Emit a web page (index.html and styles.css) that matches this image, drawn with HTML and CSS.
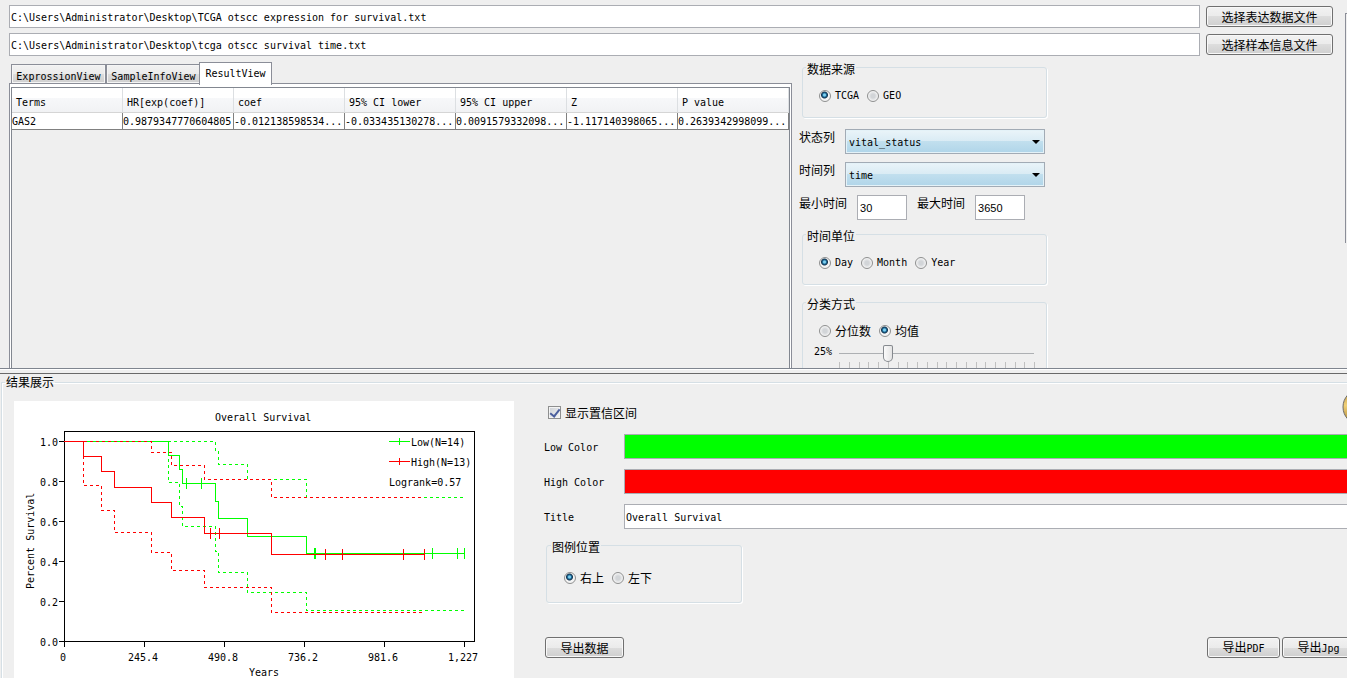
FILE: index.html
```html
<!DOCTYPE html>
<html lang="zh-CN">
<head>
<meta charset="utf-8">
<title>Overall Survival</title>
<link rel="stylesheet" href="styles.css">
</head>
<body>
<div class="app">
  <section class="top-pane">
    <div class="workspace">
      <div class="files">
        <input class="field" type="text" aria-label="Expression file" value="C:\Users\Administrator\Desktop\TCGA otscc expression for survival.txt">
        <button class="btn" type="button">选择表达数据文件</button>
        <input class="field" type="text" aria-label="Sample file" value="C:\Users\Administrator\Desktop\tcga otscc survival time.txt">
        <button class="btn" type="button">选择样本信息文件</button>
      </div>
      <div class="columns">
        <div class="views">
          <div class="tabs" role="tablist">
            <button class="tab" type="button" role="tab">ExprossionView</button>
            <button class="tab" type="button" role="tab">SampleInfoView</button>
            <button class="tab tab-active" type="button" role="tab" aria-selected="true">ResultView</button>
          </div>
          <div class="tab-panel">
            <div class="table-box">
              <table class="results">
                <thead>
                  <tr><th>Terms</th><th>HR[exp(coef)]</th><th>coef</th><th>95% CI lower</th><th>95% CI upper</th><th>Z</th><th>P value</th></tr>
                </thead>
                <tbody>
                  <tr><td>GAS2</td><td>0.9879347770604805</td><td>-0.012138598534...</td><td>-0.033435130278...</td><td>0.0091579332098...</td><td>-1.117140398065...</td><td>0.2639342998099...</td></tr>
                </tbody>
              </table>
            </div>
          </div>
        </div>
        <form class="settings">
          <fieldset class="group">
            <legend>数据来源</legend>
            <div class="choices">
              <label class="choice latin"><input type="radio" name="source" checked>TCGA</label>
              <label class="choice latin"><input type="radio" name="source">GEO</label>
            </div>
          </fieldset>
          <div class="pairs">
            <div class="pair">
              <label class="pair-label" for="status">状态列</label>
              <span class="combo"><select id="status"><option>vital_status</option></select></span>
            </div>
            <div class="pair">
              <label class="pair-label" for="time">时间列</label>
              <span class="combo"><select id="time"><option>time</option></select></span>
            </div>
            <div class="pair">
              <label class="pair-label" for="min">最小时间</label>
              <input class="number" id="min" type="text" value="30">
              <label class="pair-label" for="max">最大时间</label>
              <input class="number" id="max" type="text" value="3650">
            </div>
          </div>
          <fieldset class="group">
            <legend>时间单位</legend>
            <div class="choices">
              <label class="choice latin"><input type="radio" name="unit" checked>Day</label>
              <label class="choice latin"><input type="radio" name="unit">Month</label>
              <label class="choice latin"><input type="radio" name="unit">Year</label>
            </div>
          </fieldset>
          <fieldset class="group">
            <legend>分类方式</legend>
            <div class="choices">
              <label class="choice"><input type="radio" name="split">分位数</label>
              <label class="choice"><input type="radio" name="split" checked>均值</label>
            </div>
            <div class="slider">
              <label class="latin" for="cut">25%</label>
              <div class="slider-body">
                <input id="cut" type="range" min="0" max="100" value="25">
                <svg class="ticks" viewBox="0 0 205 8" aria-hidden="true"><path d="M5.500 0v8M15.500 0v8M25.500 0v8M34.500 0v8M44.500 0v8M54.500 0v8M64.500 0v8M73.500 0v8M83.500 0v8M93.500 0v8M103.500 0v8M112.500 0v8M122.500 0v8M132.500 0v8M142.500 0v8M151.500 0v8M161.500 0v8M171.500 0v8M181.500 0v8M190.500 0v8M200.500 0v8"/></svg>
              </div>
            </div>
          </fieldset>
        </form>
      </div>
    </div>
    <div class="edge"></div>
  </section>
  <div class="divider"></div>
  <fieldset class="bottom-pane">
    <legend>结果展示</legend>
    <div class="result">
      <svg class="chart" viewBox="14 401 500 290" width="500" height="290" role="img" aria-label="Overall Survival">
        <g class="axis">
          <path d="M64.500 431.500H474.500V641.500H64.500Z"/>
          <path d="M59 441.500h5M59 481.500h5M59 521.500h5M59 561.500h5M59 601.500h5M59 641.500h5"/>
          <path d="M64.500 642v5M144.500 642v5M224.500 642v5M304.500 642v5M384.500 642v5M464.500 642v5"/>
        </g>
        <g class="low">
          <path d="M64.500 441.500H168.500V455.500H179.500V469.500H182.500V483.500H215.500V501.500H218.500V518.500H247.500V536.500H306.500V553.500H464.500"/>
          <path class="dash" d="M168 441.500H215.500V451.500H218.500V464.500H247.500V479.500H306.500V497.500H464"/>
          <path class="dash" d="M168.500 441V482.500H179.500V506.500H182.500V526.500H215.500V551.500H218.500V572.500H247.500V592.500H306.500V610.500H464"/>
          <path d="M186.500 478v11M201.500 478v11M314.500 548v11M315.500 548v11M432.500 548v11M457.500 548v11M464.500 548v11"/>
          <path d="M389 441.500h21M399.500 438v7"/>
        </g>
        <g class="high">
          <path d="M64 441.500H83.500V456.500H101.500V471.500H114.500V487.500H151.500V502.500H171.500V517.500H204.500V533.500H271.500V554.500H424.500"/>
          <path class="dash" d="M84 441.500H151.500V452.500H171.500V465.500H204.500V479.500H271.500V497.500H424"/>
          <path class="dash" d="M83.500 456V485.500H101.500V510.500H114.500V532.500H151.500V552.500H171.500V570.500H204.500V587.500H271.500V612.500H424"/>
          <path d="M210.500 528v11M219.500 528v11M325.500 549v11M342.500 549v11M403.500 549v11M424.500 549v11"/>
          <path d="M389 461.500h21M399.500 458v7"/>
        </g>
        <g class="chart-text">
          <text x="215" y="421">Overall Survival</text>
          <text x="411" y="446">Low(N=14)</text>
          <text x="411" y="466">High(N=13)</text>
          <text x="389" y="486">Logrank=0.57</text>
          <text x="40" y="446">1.0</text>
          <text x="40" y="486">0.8</text>
          <text x="40" y="526">0.6</text>
          <text x="40" y="566">0.4</text>
          <text x="40" y="606">0.2</text>
          <text x="40" y="646">0.0</text>
          <text x="60" y="661">0</text>
          <text x="128" y="661">245.4</text>
          <text x="208" y="661">490.8</text>
          <text x="288" y="661">736.2</text>
          <text x="368" y="661">981.6</text>
          <text x="448" y="661">1,227</text>
          <text x="249" y="676">Years</text>
          <text transform="translate(34 589) rotate(-90)">Percent Survival</text>
        </g>
      </svg>
      <form class="options">
        <div class="option-head">
          <label class="choice"><input type="checkbox" checked>显示置信区间</label>
          <svg class="coin" viewBox="0 0 34 36" aria-hidden="true">
            <defs><linearGradient id="gold" x2="0" y2="1"><stop offset="0" stop-color="#b99443"/><stop offset=".45" stop-color="#f0d078"/><stop offset="1" stop-color="#a98332"/></linearGradient></defs>
            <ellipse class="coin-face" cx="17" cy="18" rx="16" ry="17"/>
          </svg>
        </div>
        <div class="option-rows">
          <label class="latin" for="low">Low Color</label>
          <button class="swatch swatch-low" id="low" type="button" aria-label="Low Color"></button>
          <label class="latin" for="high">High Color</label>
          <button class="swatch swatch-high" id="high" type="button" aria-label="High Color"></button>
          <label class="latin" for="title">Title</label>
          <input class="field" id="title" type="text" value="Overall Survival">
        </div>
        <fieldset class="group legend-place">
          <legend>图例位置</legend>
          <div class="choices">
            <label class="choice"><input type="radio" name="place" checked>右上</label>
            <label class="choice"><input type="radio" name="place">左下</label>
          </div>
        </fieldset>
        <div class="exports">
          <button class="btn export-data" type="button">导出数据</button>
          <button class="btn export" type="button">导出<span class="latin">PDF</span></button>
          <button class="btn export" type="button">导出<span class="latin">Jpg</span></button>
        </div>
      </form>
    </div>
  </fieldset>
</div>
</body>
</html>
```
FILE: styles.css
```css
* { box-sizing: border-box; }

body {
  margin: 0;
  background: #efefef;
  color: #000;
  font: 12px/16px "Noto Sans CJK SC", sans-serif;
}

input, select, button { font: inherit; color: inherit; margin: 0; border-radius: 0; }

.latin, .field, .tab, .results, .combo select, .chart-text {
  font-family: "DejaVu Sans Mono", "Liberation Mono", monospace;
  font-size: 10px;
}

.app {
  display: flex;
  flex-direction: column;
  height: 100vh;
  overflow: hidden;
}

/* Upper half */
.top-pane {
  display: flex;
  flex: 368 1 0;
  min-height: 0;
  overflow: hidden;
}

.workspace {
  display: flex;
  flex-direction: column;
  flex: 1;
  min-width: 0;
}

.edge {
  width: 2px;
  height: 230px;
  margin-top: 13px;
  border-left: 1px solid #8b8e98;
  border-top: 1px solid #8b8e98;
}

.files {
  display: grid;
  grid-template-columns: 1fr 127px;
  align-items: center;
  gap: 5px 6px;
  padding: 5px 12px 0 9px;
}

.field {
  width: 100%;
  height: 23px;
  padding: 2px 1px 0;
  border: 1px solid #abadb3;
  background: #fff;
}

.btn {
  height: 21px;
  padding: 0;
  border: 1px solid #707070;
  border-radius: 3px;
  background: linear-gradient(#f2f2f2, #ebebeb 50%, #dddddd 50%, #cfcfcf);
  box-shadow: inset 0 0 0 1px #f8f8f8;
  line-height: 18px;
}

.columns {
  display: grid;
  grid-template-columns: 783fr 546fr;
  column-gap: 7px;
  flex: 1;
  min-height: 0;
  padding-left: 9px;
}

.views {
  display: flex;
  flex-direction: column;
  padding-top: 6px;
  min-height: 0;
}

.tabs {
  display: flex;
  align-items: flex-end;
  padding-left: 2px;
}

.tab {
  width: 95px;
  height: 19px;
  padding: 4px 0 0;
  border: 1px solid #8b8e98;
  border-bottom: 0;
  background: linear-gradient(#f2f2f2, #ebebeb 50%, #dddddd 50%, #cfcfcf);
  box-shadow: inset 0 0 0 1px #f5f5f5;
}

.tab-active {
  width: 73px;
  height: 23px;
  margin: 0 0 -2px -2px;
  padding: 0;
  background: #fff;
  box-shadow: none;
  z-index: 1;
}

.tab-panel {
  display: flex;
  flex: 1;
  padding: 3px 1px 0;
  border: 1px solid #8b8e98;
  border-bottom: 0;
  background: #fff;
}

.table-box {
  flex: 1;
  min-width: 0;
  border: 1px solid #828790;
  border-bottom: 0;
  background: #efefef;
}

.results {
  width: 100%;
  table-layout: fixed;
  border-collapse: separate;
  border-spacing: 0;
  line-height: 14px;
}

.results th {
  height: 25px;
  padding: 5px 4px 0;
  border-right: 1px solid #dcdfe2;
  border-bottom: 1px solid #d5d5d5;
  background: linear-gradient(#fff, #fff 40%, #f7f8fa 40%, #f1f2f4);
  font-weight: normal;
  text-align: left;
}

.results td {
  height: 17px;
  padding: 2px 0 0;
  border-right: 1px solid #808080;
  border-bottom: 1px solid #808080;
  background: #fff;
  white-space: nowrap;
  overflow: hidden;
}

/* Settings column */
.settings {
  display: flex;
  flex-direction: column;
  width: 250px;
  padding-top: 3px;
}

.group {
  width: 245px;
  min-width: 0;
  margin: 0 0 0 3px;
  padding: 13px 11px 13px 16px;
  border: 1px solid #d5dfe5;
  border-radius: 3px;
  box-shadow: 1px 1px 0 #fff;
}

.group legend {
  margin-left: -13px;
  padding: 4px 1px 0;
  line-height: 12px;
}

.choices { display: flex; gap: 8px; }

.choice {
  display: flex;
  align-items: center;
  gap: 4px;
}

.choice input {
  appearance: none;
  width: 12px;
  height: 12px;
  border: 1px solid #8e8f8f;
  border-radius: 50%;
  background: radial-gradient(circle, #d2d5d8 0 2px, #f6f6f6 5px);
}

.choice input[type="radio"]:checked {
  background: radial-gradient(circle at 45% 40%, #7fd0ee 0 1px, #1c6c9c 2px, #14344e 3px, #f4f4f4 4px);
}

.choice input[type="checkbox"] {
  width: 13px;
  height: 13px;
  border-radius: 0;
  background: linear-gradient(135deg, #ccd0d6, #f6f6f6);
  box-shadow: inset 0 0 0 1px #f4f4f4;
  position: relative;
}

.choice input[type="checkbox"]::after {
  content: "";
  position: absolute;
  left: 3px;
  top: 0;
  width: 4px;
  height: 8px;
  border: solid #4b5f9e;
  border-width: 0 2px 2px 0;
  transform: rotate(38deg);
}

.pairs {
  display: flex;
  flex-direction: column;
  gap: 8px;
  padding: 11px 0 6px;
}

.pair { display: flex; align-items: flex-start; gap: 10px; }

.combo { position: relative; width: 200px; }

.combo select {
  display: block;
  appearance: none;
  width: 100%;
  height: 25px;
  padding: 2px 3px 0;
  border: 1px solid #a2abb5;
  background: linear-gradient(#eaf4f9, #d9ebf4 50%, #c1dfee 50%, #b0d5e9);
  box-shadow: inset 0 0 0 1px #e4f2f8;
}

.combo::after {
  content: "";
  position: absolute;
  right: 5px;
  top: 11px;
  border: 4px solid transparent;
  border-top-color: #000;
  border-bottom: 0;
  pointer-events: none;
}

.number {
  width: 50px;
  height: 25px;
  padding: 1px 2px 0;
  border: 1px solid #abadb3;
  background: #fff;
  font: 11px "Liberation Sans", Arial, sans-serif;
}

.pairs + .group { margin-bottom: 9px; }

.slider {
  display: flex;
  gap: 2px;
  margin: 5px -8px 0 -5px;
}

.slider-body { width: 205px; }

.slider input {
  display: block;
  appearance: none;
  width: 100%;
  height: 18px;
  background: linear-gradient(#adb0b3, #adb0b3) center / 195px 1px no-repeat;
}

.slider input::-webkit-slider-thumb {
  appearance: none;
  width: 10px;
  height: 17px;
  background:
    linear-gradient(90deg, #fafafa, #e4e4e4) padding-box,
    #85898e border-box;
  border: 1px solid transparent;
  border-radius: 2px 2px 5px 5px;
}

.ticks { display: block; width: 100%; stroke: #c0c0c0; }

/* Split bar */
.divider {
  height: 6px;
  border-top: 1px solid #7f858f;
  border-bottom: 1px solid #696969;
  background: linear-gradient(#fff 1px, #efefef 1px);
}

/* Lower half */
.bottom-pane {
  flex: 293 1 0;
  min-height: 0;
  min-width: 0;
  margin: 0 -2px -2px 1px;
  padding: 11px 0 0 12px;
  border: 1px solid #d5dfe5;
  box-shadow: inset 1px 1px 0 #fff;
}

.bottom-pane > legend {
  margin-left: -9px;
  padding: 0 1px;
}

.result { display: flex; gap: 30px; }

.chart { flex: none; background: #fff; }

.chart path { fill: none; stroke-width: 1; shape-rendering: crispEdges; }

.axis { stroke: #000; }
.low { stroke: #0f0; }
.high { stroke: #f00; }
.chart .dash { stroke-dasharray: 3 3; }

.options { flex: 1; min-width: 0; }

.option-head {
  display: flex;
  justify-content: space-between;
  height: 23px;
  padding-left: 4px;
}

.coin { width: 34px; height: 36px; margin: -12px -28px 0 0; }
.coin-face { fill: url(#gold); stroke: #6b6b6b; }

.option-rows {
  display: grid;
  grid-template-columns: 80px 1fr;
  align-items: center;
  row-gap: 10px;
  padding-top: 10px;
}

.option-rows label { padding-top: 3px; }

.option-rows .field, .swatch {
  width: 100%;
  height: 25px;
  border: 1px solid #abadb3;
  border-right: 0;
}

.swatch-low { background: #0f0; }
.swatch-high { background: #f00; }

.legend-place { width: 196px; margin: 8px 0 0 2px; padding: 17px 11px 16px 17px; }

.exports { display: flex; gap: 2px; margin: 34px -7px 0 1px; }

.export { width: 73px; flex: none; }
.export-data { width: 79px; margin-right: auto; }
```
